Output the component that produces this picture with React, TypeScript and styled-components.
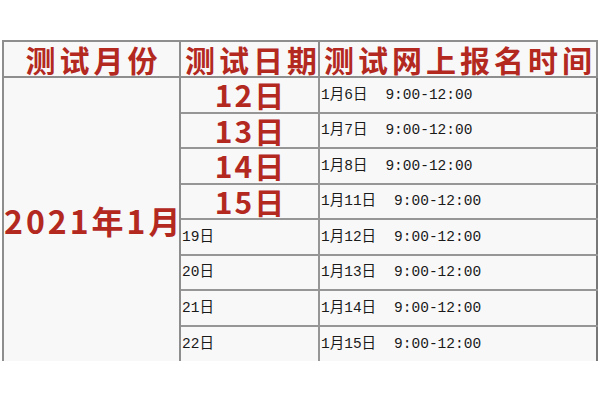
import styled, { createGlobalStyle } from 'styled-components';

const GlobalStyle = createGlobalStyle`
  html, body {
    margin: 0;
    padding: 0;
    background: #ffffff;
  }
`;

const Page = styled.div`
  width: 600px;
  height: 400px;
  padding: 40px 0 0 2px;
  box-sizing: border-box;
  background: #ffffff;
`;

const Table = styled.table`
  width: 594px;
  border-collapse: collapse;
  table-layout: fixed;
  background: #f8f8f8;
  font-family: 'Noto Sans CJK SC', sans-serif;
`;

const HeadRow = styled.tr`
  height: 36px;
`;

const Row = styled.tr`
  height: 35.5px;

  &:last-child td {
    border-bottom: none;
  }
`;

const HeadCell = styled.th`
  padding: 0 0 0 4px;
  border: 2px solid #8e8e8e;
  color: #b3281f;
  font-size: 30px;
  font-weight: 700;
  letter-spacing: 4px;
  line-height: 34px;
  text-align: center;
  white-space: nowrap;
`;

const MonthCell = styled.td`
  padding: 0;
  border: 2px solid #8e8e8e;
  border-bottom: none;
  color: #b3281f;
  font-size: 32px;
  font-weight: 700;
  letter-spacing: 3px;
  text-align: center;
  vertical-align: middle;
  white-space: nowrap;
`;

const DateCell = styled.td<{ $big?: boolean }>`
  padding: 0 0 0 ${(p) => (p.$big ? '2px' : '1px')};
  border: 2px solid #969696;
  color: ${(p) => (p.$big ? '#b3281f' : '#1a1a1a')};
  font-family: ${(p) =>
    p.$big
      ? "'Noto Sans CJK SC', sans-serif"
      : "'Liberation Mono', 'Noto Sans CJK SC', monospace"};
  font-size: ${(p) => (p.$big ? '30px' : '14.5px')};
  font-weight: ${(p) => (p.$big ? 700 : 400)};
  letter-spacing: ${(p) => (p.$big ? '2px' : '0')};
  line-height: ${(p) => (p.$big ? '31px' : '1')};
  text-align: ${(p) => (p.$big ? 'center' : 'left')};
  white-space: nowrap;
`;

const TimeCell = styled.td`
  padding: 0 0 0 1px;
  border: 2px solid #969696;
  border-right-color: #777777;
  color: #1a1a1a;
  font-family: 'Liberation Mono', 'Noto Sans CJK SC', monospace;
  font-size: 14.5px;
  line-height: 1;
  white-space: nowrap;
`;

const Hours = styled.span`
  margin-left: 18px;
`;

const rows = [
  { date: '12日', big: true, day: '1月6日' },
  { date: '13日', big: true, day: '1月7日' },
  { date: '14日', big: true, day: '1月8日' },
  { date: '15日', big: true, day: '1月11日' },
  { date: '19日', big: false, day: '1月12日' },
  { date: '20日', big: false, day: '1月13日' },
  { date: '21日', big: false, day: '1月14日' },
  { date: '22日', big: false, day: '1月15日' },
];

export default function App() {
  return (
    <Page>
      <GlobalStyle />
      <Table>
        <colgroup>
          <col style={{ width: 177 }} />
          <col style={{ width: 139 }} />
          <col style={{ width: 278 }} />
        </colgroup>
        <thead>
          <HeadRow>
            <HeadCell>测试月份</HeadCell>
            <HeadCell>测试日期</HeadCell>
            <HeadCell>测试网上报名时间</HeadCell>
          </HeadRow>
        </thead>
        <tbody>
          {rows.map((r, i) => (
            <Row key={r.date}>
              {i === 0 && <MonthCell rowSpan={rows.length}>2021年1月</MonthCell>}
              <DateCell $big={r.big}>{r.date}</DateCell>
              <TimeCell>
                {r.day}
                <Hours>9:00-12:00</Hours>
              </TimeCell>
            </Row>
          ))}
        </tbody>
      </Table>
    </Page>
  );
}
